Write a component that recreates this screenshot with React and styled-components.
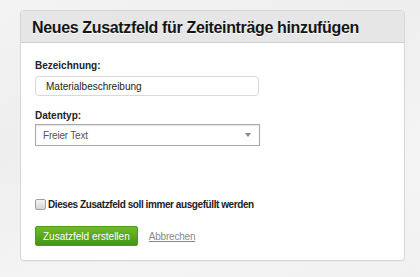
import React from "react";
import styled, { createGlobalStyle } from "styled-components";

const GlobalStyle = createGlobalStyle`
  body {
    margin: 0;
    background: linear-gradient(160deg, #f3f3f3 0%, #eeeeee 35%, #f4f4f4 70%, #f1f1f1 100%);
    font-family: "Liberation Sans", Arial, sans-serif;
    min-height: 277px;
  }
`;

const Page = styled.div`
  padding: 10px 15px 16px 20px;
`;

const Panel = styled.div`
  background: #fff;
  border: 1px solid #d6d6d6;
  border-radius: 4px;
  width: 383px;
  box-shadow: 0 1px 1px rgba(0, 0, 0, 0.03);
`;

const PanelHeader = styled.div`
  box-sizing: border-box;
  background: #e6e6e6;
  border-bottom: 1px solid #cfcfcf;
  border-radius: 4px 4px 0 0;
  height: 32px;
  display: flex;
  align-items: center;
  padding: 3px 0 0 11px;
  h1 {
    margin: 0;
    font-size: 16px;
    letter-spacing: -0.35px;
    font-weight: bold;
    color: #151515;
    text-shadow: 0 1px 0 #fff;
  }
`;

const Body = styled.div`
  padding: 17px 14px 14px 14px;
  display: flex;
  flex-direction: column;
`;

const Label = styled.label`
  font-size: 10px;
  line-height: 12px;
  font-weight: bold;
  color: #222;
  margin-bottom: ${(p) => p.gap || 4}px;
`;

const TextInput = styled.input`
  box-sizing: border-box;
  width: 224px;
  height: 20px;
  border: 1px solid #d9d9d9;
  border-radius: 4px;
  padding: 0 10px;
  font-family: "Liberation Sans", Arial, sans-serif;
  font-size: 10px;
  color: #222;
  margin: 0 0 14px 0;
  outline: none;
`;

const SelectBox = styled.div`
  box-sizing: border-box;
  width: 225px;
  height: 22px;
  border: 1px solid #a9a9a9;
  box-shadow: inset 0 1px 2px rgba(0, 0, 0, 0.12);
  display: flex;
  align-items: center;
  justify-content: space-between;
  padding: 0 8px 0 7px;
  font-size: 10px;
  letter-spacing: -0.2px;
  color: #555;
`;

const Arrow = styled.span`
  width: 0;
  height: 0;
  border-left: 3px solid transparent;
  border-right: 3px solid transparent;
  border-top: 4px solid #888;
`;

const CheckRow = styled.label`
  display: flex;
  align-items: center;
  gap: 2px;
  height: 13px;
  margin-top: 52px;
  font-size: 10px;
  letter-spacing: -0.42px;
  font-weight: bold;
  color: #222;
`;

const CheckBox = styled.span`
  box-sizing: border-box;
  width: 11px;
  height: 11px;
  border: 1px solid #a0a0a0;
  border-radius: 2px;
  background: linear-gradient(#f4f4f4, #d6d6d6);
`;

const Actions = styled.div`
  display: flex;
  align-items: center;
  gap: 11px;
  margin-top: 15px;
`;

const Button = styled.button`
  height: 20px;
  padding: 0 7px;
  border: 1px solid #4c9a1a;
  border-radius: 2px;
  background: linear-gradient(#6dbb2e, #449512);
  color: #fff;
  font-family: "Liberation Sans", Arial, sans-serif;
  font-size: 10px;
  letter-spacing: 0;
  cursor: pointer;
`;

const LinkButton = styled.a`
  font-size: 10px;
  letter-spacing: -0.2px;
  color: #8a8a8a;
  text-decoration: underline;
  cursor: pointer;
`;

export default function App() {
  return (
    <Page>
      <GlobalStyle />
      <Panel>
        <PanelHeader>
          <h1>Neues Zusatzfeld für Zeiteinträge hinzufügen</h1>
        </PanelHeader>
        <Body>
          <Label>Bezeichnung:</Label>
          <TextInput defaultValue="Materialbeschreibung" />
          <Label gap={2}>Datentyp:</Label>
          <SelectBox>
            <span>Freier Text</span>
            <Arrow />
          </SelectBox>
          <CheckRow>
            <CheckBox />
            Dieses Zusatzfeld soll immer ausgefüllt werden
          </CheckRow>
          <Actions>
            <Button>Zusatzfeld erstellen</Button>
            <LinkButton>Abbrechen</LinkButton>
          </Actions>
        </Body>
      </Panel>
    </Page>
  );
}
